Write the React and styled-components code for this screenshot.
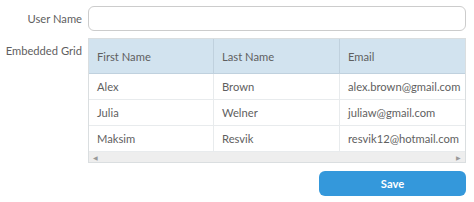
import styled, { createGlobalStyle } from "styled-components";

const Global = createGlobalStyle`
  body {
    margin: 0;
    background: #ffffff;
    font-family: Lato, "Liberation Sans", sans-serif;
    font-size: 11.2px;
    color: #5f5f5f;
  }
`;

const Form = styled.div`
  display: flex;
  flex-direction: column;
  gap: 8px;
  padding: 6px 8px 6px 0;
  width: 474px;
  box-sizing: border-box;
`;

const Row = styled.div`
  display: flex;
  align-items: ${(p) => (p.top ? "flex-start" : "center")};
  margin-top: ${(p) => (p.top ? "-1px" : "0")};
`;

const Label = styled.label`
  width: 82px;
  flex: none;
  text-align: right;
  padding-right: 6px;
  padding-top: ${(p) => (p.top ? "6px" : "0")};
  white-space: nowrap;
`;

const Input = styled.input`
  flex: 1;
  height: 25px;
  box-sizing: border-box;
  border: 1px solid #cccccc;
  border-radius: 6px;
  outline: none;
  font: inherit;
  padding: 0 8px;
`;

const Grid = styled.div`
  flex: 1;
  border: 1px solid #dadee0;
  overflow: hidden;
  display: flex;
  flex-direction: column;
`;

const Table = styled.div`
  display: grid;
  grid-template-columns: 125px 126px 130px;
  width: 381px;
`;

const Head = styled.div`
  background: #d2e3ef;
  height: 35px;
  box-sizing: border-box;
  display: flex;
  align-items: center;
  padding-left: 8px;
  border-right: 1px solid #c0d1de;
  border-bottom: 1px solid #c0d1de;
`;

const Cell = styled.div`
  height: 26px;
  box-sizing: border-box;
  display: flex;
  align-items: center;
  padding-left: 8px;
  border-right: 1px solid #e8ebed;
  border-bottom: 1px solid #e8ebed;
  white-space: nowrap;
`;

const Scroll = styled.div`
  height: 10px;
  background: #eeeeee;
  display: flex;
  align-items: center;
  justify-content: space-between;
  padding: 0 4px;
  font-size: 6px;
  color: #999999;
`;

const Footer = styled.div`
  display: flex;
  justify-content: flex-end;
`;

const Button = styled.button`
  width: 147px;
  height: 25px;
  border: none;
  border-radius: 6px;
  background: #3498db;
  color: #ffffff;
  font: inherit;
  font-weight: bold;
`;

const rows = [
  ["Alex", "Brown", "alex.brown@gmail.com"],
  ["Julia", "Welner", "juliaw@gmail.com"],
  ["Maksim", "Resvik", "resvik12@hotmail.com"],
];

export default function App() {
  return (
    <>
      <Global />
      <Form>
        <Row>
          <Label>User Name</Label>
          <Input />
        </Row>
        <Row top>
          <Label top>Embedded Grid</Label>
          <Grid>
            <Table>
              <Head>First Name</Head>
              <Head>Last Name</Head>
              <Head>Email</Head>
              {rows.map((r) => r.map((c, i) => <Cell key={r[0] + i}>{c}</Cell>))}
            </Table>
            <Scroll>
              <span>◀</span>
              <span>▶</span>
            </Scroll>
          </Grid>
        </Row>
        <Footer>
          <Button>Save</Button>
        </Footer>
      </Form>
    </>
  );
}
